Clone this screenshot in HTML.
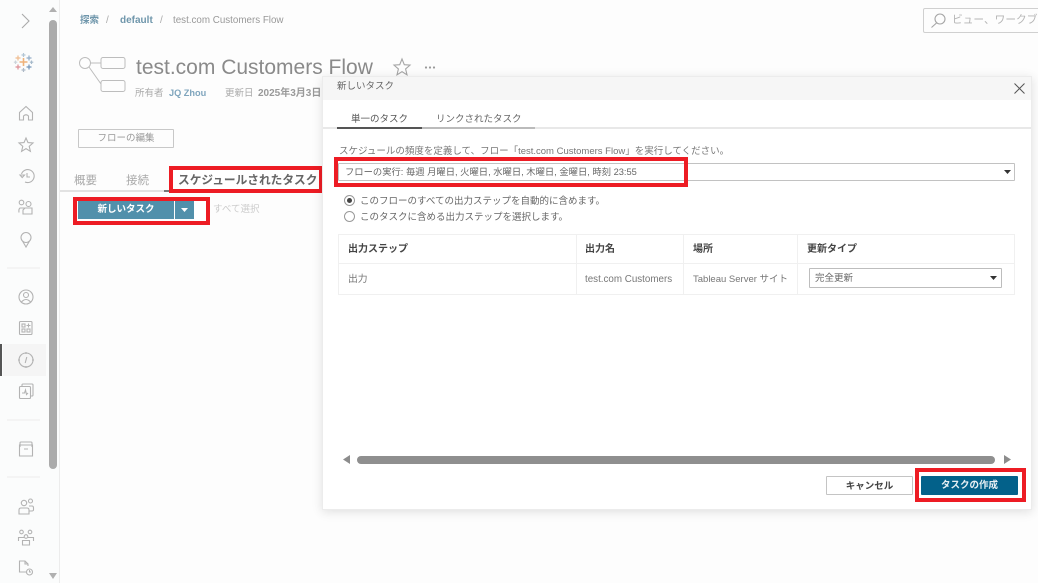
<!DOCTYPE html>
<html lang="ja"><head><meta charset="utf-8"><title>新しいタスク</title>
<style>
*{box-sizing:border-box}
html,body{margin:0;padding:0}
body{width:1038px;height:583px;overflow:hidden;position:relative;background:#fdfdfd;font-family:"Liberation Sans","Noto Sans CJK JP",sans-serif;color:#666}
.a{position:absolute;white-space:nowrap}
.red{position:absolute;border:4px solid #ed1c24}
svg{position:absolute;overflow:visible}
.ic{fill:none;stroke:#b3b3b3;stroke-width:1.1}
</style></head><body>
<div class="a" style="left:0;top:0;width:60px;height:583px;background:#fbfcfc;border-right:1px solid #ececec"></div>
<div class="a" style="left:3px;top:344px;width:43px;height:32px;background:#f5f5f5"></div>
<div class="a" style="left:0;top:344px;width:2px;height:32px;background:#555"></div>
<div class="a" style="left:49px;top:20px;width:8px;height:449px;background:#ababab;border-radius:4px"></div>
<svg width="60" height="583" style="left:0;top:0">
<path d="M49 12L53 7L57 12Z M49 573H57L53 579Z" fill="#b0b0b0"/>
<path d="M22 14L29 21L22 28" fill="none" stroke="#aaa" stroke-width="1.100"/>
<g fill="none" stroke-width="1.200">
<path d="M23.500 58v8M19.500 62h8" stroke="#efb27a" stroke-width="1.600"/>
<path d="M18 55.500v5M15.500 58h5" stroke="#efbd90"/>
<path d="M23.500 53v4M21.500 55h4" stroke="#b2c6d4"/>
<path d="M29 55.500v5M26.500 58h5" stroke="#92adc7"/>
<path d="M15.500 60.500v3.500M13.800 62.200h3.500" stroke="#ccd4da"/>
<path d="M31.500 60.500v3.500M29.800 62.200h3.500" stroke="#a5b9ca"/>
<path d="M18 64.500v5M15.500 67h5" stroke="#dd8f96"/>
<path d="M23.500 68v4M21.500 70h4" stroke="#aebac7"/>
<path d="M29 64.500v5M26.500 67h5" stroke="#7394b8"/>
</g>
<g class="ic">
<path d="M19.500 120V112.500L26 106.500L32.500 112.500V120H28.500V116Q26 113.500 23.500 116V120Z"/>
<path d="M26 138L28 142.600L33 143L29.200 146.300L30.400 151.300L26 148.600L21.600 151.300L22.800 146.300L19 143L24 142.600Z"/>
<path d="M21.500 174A6.500 6.500 0 1 1 25 182M20 175H24.500L22.200 177.500ZM27 173V177H30"/>
<circle cx="21.500" cy="202.500" r="2.300"/><circle cx="28.500" cy="204" r="2.500"/><path d="M19 212.500Q18.500 209 20 208H24.500M25 208H32V214H23L23 210Z"/>
<circle cx="26" cy="237.500" r="5"/><path d="M22.500 241L26 247L29.500 241"/>
<circle cx="26" cy="297" r="7"/><circle cx="26" cy="295" r="2.500"/><path d="M21 302.500Q26 296.500 31 302.500"/>
<rect x="19.500" y="321.500" width="12.500" height="13" rx="1"/><rect x="22" y="324" width="3" height="3"/><rect x="22" y="329" width="3" height="3"/><rect x="27" y="329" width="3" height="3"/><path d="M28.500 323.500v4M26.500 325.500h4"/>
<circle cx="26" cy="360" r="7"/><path d="M26.800 357L25.200 363M26 352v2M26 366v2M18 360h2M32 360h2"/>
<rect x="19.500" y="386.500" width="11" height="12" rx="1"/><path d="M22 386.500V385Q22 384 23 384H32Q33 384 33 385V395Q33 396 32 396H30.500M22 393L24.500 393L25.500 390L26.500 394.500L28 393"/>
<path d="M20 447V443Q20 442 21 442H31Q32 442 32 443V447M19.500 445H32.500V456H19.500ZM24 449H28"/>
<circle cx="24" cy="503" r="2.700"/><circle cx="30.500" cy="501" r="2"/><path d="M19 514V510Q19 508 21 508H27Q29 508 29 510V514ZM29 506H32Q33.500 506 33.500 508V510Q33.500 511 31 511H29"/>
<circle cx="21.500" cy="532" r="1.800"/><circle cx="30" cy="532" r="1.800"/><circle cx="26" cy="536.500" r="1.800"/><path d="M18.500 541V537.500H24M33.500 541V537.500H28M22.500 545V540.500H29.500V545Z"/>
<path d="M27 572H19.500V561H25L28 564V566M25 561V564H28"/><circle cx="29.500" cy="572" r="3"/><path d="M29.500 570V572H31"/>
</g>
<path d="M7 268H40M7 420H40M7 477H40" stroke="#ececec" stroke-width="1"/>
</svg>

<div class="a" style="left:80px;top:15px;font-size:9.500px;line-height:12px;font-weight:bold;color:#6f96ab">探索</div>
<div class="a" style="left:106px;top:15px;font-size:10px;line-height:12px;color:#aaa">/</div>
<div class="a" style="left:120px;top:15px;font-size:10px;line-height:12px;font-weight:bold;color:#6f96ab">default</div>
<div class="a" style="left:160px;top:15px;font-size:10px;line-height:12px;color:#aaa">/</div>
<div class="a" style="left:173px;top:15px;font-size:9.800px;line-height:12px;color:#999">test.com Customers Flow</div>

<svg width="50" height="40" style="left:78px;top:56px" fill="none" stroke="#bdbdbd" stroke-width="1">
<circle cx="7" cy="7" r="5.500"/><rect x="23" y="1.500" width="24" height="11" rx="2"/><rect x="23" y="24.500" width="24" height="11" rx="2"/><path d="M12.500 7H23M11 11L23 28"/>
</svg>
<div class="a" style="left:136px;top:55px;font-size:21px;line-height:26px;color:#8a8a8a">test.com Customers Flow</div>
<svg width="20" height="20" style="left:392px;top:58px" fill="none" stroke="#a5a5a5" stroke-width="1.100"><path d="M10 1L12.300 6.700L18 7.100L13.600 11L15 16.800L10 13.700L5 16.800L6.400 11L2 7.100L7.700 6.700Z"/></svg>
<svg width="14" height="4" style="left:424px;top:66px"><circle cx="2" cy="1.500" r="1.100" fill="#999"/><circle cx="6" cy="1.500" r="1.100" fill="#999"/><circle cx="10" cy="1.500" r="1.100" fill="#999"/></svg>
<div class="a" style="left:135px;top:87px;font-size:9.500px;line-height:13px;color:#aaa">所有者</div>
<div class="a" style="left:169px;top:87px;font-size:9.200px;line-height:13px;font-weight:bold;color:#7fa5bd">JQ Zhou</div>
<div class="a" style="left:225px;top:87px;font-size:9.500px;line-height:13px;color:#aaa">更新日</div>
<div class="a" style="left:258px;top:87px;font-size:10px;line-height:13px;color:#999;font-weight:bold;width:64px;overflow:hidden">2025年3月3日</div>

<div class="a" style="left:78px;top:129px;width:96px;height:19px;border:1px solid #c8c8c8;border-radius:1px;background:#fdfdfd;text-align:center;font-size:9.500px;line-height:17px;color:#999">フローの編集</div>

<div class="a" style="left:74px;top:173px;font-size:11.500px;line-height:16px;color:#aaa">概要</div>
<div class="a" style="left:126px;top:173px;font-size:11.500px;line-height:16px;color:#aaa">接続</div>
<div class="a" style="left:60px;top:190px;width:263px;height:2px;background:#e2e2e2"></div>
<div class="a" style="left:164px;top:190px;width:159px;height:2px;background:#777"></div>
<div class="a" style="left:173px;top:170px;width:146px;height:20px;background:#fff"></div>
<div class="a" style="left:178px;top:173px;font-size:11.700px;line-height:16px;font-weight:bold;color:#666">スケジュールされたタスク</div>
<div class="red" style="left:169px;top:166px;width:154px;height:27px"></div>

<div class="a" style="left:78px;top:201px;width:96px;height:18px;background:#5190ab;color:#fff;text-align:center;font-size:9.500px;line-height:17px;font-weight:bold">新しいタスク</div>
<div class="a" style="left:175px;top:201px;width:19px;height:18px;background:#5190ab"></div>
<div class="a" style="left:194px;top:201px;width:12px;height:20px;background:#fff"></div>
<svg width="8" height="5" style="left:181px;top:208px"><path d="M0 0H7L3.500 4Z" fill="#fff"/></svg>
<div class="red" style="left:73px;top:197px;width:137px;height:28px"></div>
<div class="a" style="left:213px;top:203px;font-size:9.500px;line-height:13px;color:#ccc">すべて選択</div>

<div class="a" style="left:923px;top:8px;width:130px;height:25px;background:#fdfdfd;border:1px solid #d0d0d0;border-radius:2px"></div>
<svg width="16" height="16" style="left:930px;top:12px" fill="none" stroke="#a5a5a5" stroke-width="1.100"><circle cx="10" cy="7" r="5"/><path d="M6.500 11L1.500 15.500"/></svg>
<div class="a" style="left:952px;top:13px;width:86px;overflow:hidden;font-size:10.700px;line-height:15px;color:#b5b5b5">ビュー、ワークブック</div>

<!-- dialog -->
<div class="a" style="left:322px;top:76px;width:710px;height:434px;background:#fff;border:1px solid #ececec;box-shadow:0 2px 10px rgba(0,0,0,.12)">
<div class="a" style="left:0;top:0;width:708px;height:23px;background:#f6f6f6"></div>
</div>
<div class="a" style="left:337px;top:80px;font-size:9.500px;line-height:14px;color:#666">新しいタスク</div>
<svg width="12" height="12" style="left:1014px;top:83px" fill="none" stroke="#555" stroke-width="1"><path d="M0.500 0.500L10.500 10.500M10.500 0.500L0.500 10.500"/></svg>
<div class="a" style="left:323px;top:127px;width:708px;height:2px;background:#e8e8e8"></div>
<div class="a" style="left:351px;top:113px;font-size:9.500px;line-height:14px;color:#555">単一のタスク</div>
<div class="a" style="left:436px;top:113px;font-size:9.500px;line-height:14px;color:#666">リンクされたタスク</div>
<div class="a" style="left:337px;top:127px;width:85px;height:2px;background:#555"></div>
<div class="a" style="left:422px;top:127px;width:113px;height:2px;background:#bbb"></div>

<div class="a" style="left:339px;top:145px;font-size:9.500px;line-height:13px;color:#777">スケジュールの頻度を定義して、フロー「test.com Customers Flow」を実行してください。</div>
<div class="a" style="left:338px;top:163px;width:677px;height:18px;background:#fff;border:1px solid #c2c2c2;border-radius:1px"></div>
<div class="a" style="left:345px;top:165px;font-size:9.300px;line-height:14px;color:#666">フローの実行: 毎週 月曜日, 火曜日, 水曜日, 木曜日, 金曜日, 時刻 23:55</div>
<svg width="8" height="5" style="left:1004px;top:170px"><path d="M0 0H7L3.500 4Z" fill="#333"/></svg>
<div class="red" style="left:334px;top:157px;width:354px;height:30px"></div>

<svg width="14" height="30" style="left:343px;top:194px" fill="none" stroke="#999"><circle cx="6.500" cy="6.500" r="5"/><circle cx="6.500" cy="6.500" r="2.500" fill="#444" stroke="none"/><circle cx="6.500" cy="22.500" r="5"/></svg>
<div class="a" style="left:360px;top:195px;font-size:9.500px;line-height:13px;color:#666">このフローのすべての出力ステップを自動的に含めます。</div>
<div class="a" style="left:360px;top:211px;font-size:9.500px;line-height:13px;color:#666">このタスクに含める出力ステップを選択します。</div>

<div class="a" style="left:338px;top:234px;width:677px;height:61px;border:1px solid #f0f0f0"></div>
<div class="a" style="left:339px;top:263px;width:675px;height:1px;background:#f0f0f0"></div>
<div class="a" style="left:576px;top:235px;width:1px;height:59px;background:#f0f0f0"></div>
<div class="a" style="left:683px;top:235px;width:1px;height:59px;background:#f0f0f0"></div>
<div class="a" style="left:797px;top:235px;width:1px;height:59px;background:#f0f0f0"></div>
<div class="a" style="left:348px;top:243px;font-size:10px;line-height:13px;font-weight:bold;color:#444">出力ステップ</div>
<div class="a" style="left:585px;top:243px;font-size:10px;line-height:13px;font-weight:bold;color:#444">出力名</div>
<div class="a" style="left:693px;top:243px;font-size:10px;line-height:13px;font-weight:bold;color:#444">場所</div>
<div class="a" style="left:807px;top:243px;font-size:10px;line-height:13px;font-weight:bold;color:#444">更新タイプ</div>
<div class="a" style="left:348px;top:273px;font-size:9.800px;line-height:13px;color:#777">出力</div>
<div class="a" style="left:585px;top:273px;font-size:9.800px;line-height:13px;color:#777">test.com Customers</div>
<div class="a" style="left:693px;top:273px;font-size:9.500px;line-height:13px;color:#777">Tableau Server サイト</div>
<div class="a" style="left:809px;top:268px;width:193px;height:20px;background:#fff;border:1px solid #bdbdbd;border-radius:1px"></div>
<div class="a" style="left:815px;top:272px;font-size:9.500px;line-height:13px;color:#666">完全更新</div>
<svg width="8" height="5" style="left:990px;top:276px"><path d="M0 0H7L3.500 4Z" fill="#333"/></svg>

<svg width="8" height="10" style="left:343px;top:455px"><path d="M7 0V9L0 4.500Z" fill="#8c8c8c"/></svg>
<div class="a" style="left:357px;top:456px;width:638px;height:8px;background:#8f8f8f;border-radius:4px"></div>
<svg width="8" height="10" style="left:1004px;top:455px"><path d="M0 0V9L7 4.500Z" fill="#8c8c8c"/></svg>

<div class="a" style="left:826px;top:476px;width:87px;height:19px;background:#fff;border:1px solid #c4c4c4;border-radius:1px;text-align:center;font-size:9.500px;line-height:19px;font-weight:bold;color:#444">キャンセル</div>
<div class="a" style="left:921px;top:476px;width:97px;height:19px;background:#03618a;border-radius:1px;text-align:center;font-size:9.500px;line-height:20px;font-weight:bold;color:#e8f0f4">タスクの作成</div>
<div class="red" style="left:915px;top:468px;width:111px;height:34px"></div>
</body></html>
